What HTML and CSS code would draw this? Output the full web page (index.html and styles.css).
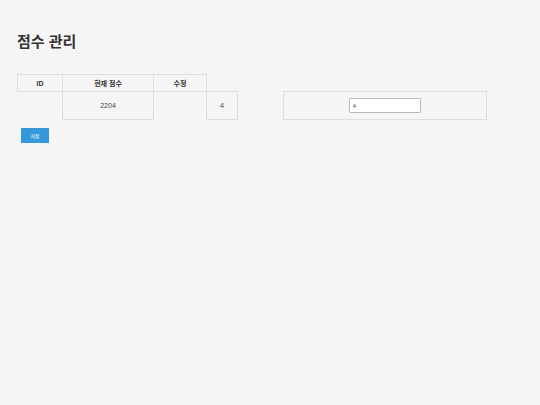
FILE: index.html
```html
<!DOCTYPE html>
<html lang="ko">
<head>
<meta charset="utf-8">
<link rel="stylesheet" href="styles.css">
</head>
<body>
<h1 class="title">점수 관리</h1>
<table class="score-table">
  <colgroup>
    <col class="c1"><col class="c2"><col class="c3"><col class="c4"><col class="c5"><col class="c6">
  </colgroup>
  <thead>
    <tr>
      <th>ID</th>
      <th>현재 점수</th>
      <th>수정</th>
    </tr>
  </thead>
  <tbody>
    <tr>
      <td class="empty"></td>
      <td>2204</td>
      <td class="empty"></td>
      <td>4</td>
      <td class="empty"></td>
      <td><input class="score-input" type="text" value="4"></td>
    </tr>
  </tbody>
</table>
<button class="save-btn">저장</button>
</body>
</html>
```
FILE: styles.css
```css
html, body {
  margin: 0;
  padding: 0;
  background: #f5f5f5;
}
body {
  padding: 17px;
  font-family: "Liberation Sans", "Noto Sans CJK KR", sans-serif;
  color: #333;
}
.title {
  margin: 16px 0 23px;
  font-size: 15px;
  line-height: 18px;
  font-weight: bold;
  color: #333;
}
.score-table {
  border-collapse: collapse;
  table-layout: fixed;
  width: 469px;
}
.score-table th,
.score-table td {
  border: 1px solid #dddddd;
  font-size: 7px;
  text-align: center;
  padding: 0;
}
.score-table th {
  height: 16px;
  font-weight: bold;
  color: #333;
}
.score-table td {
  height: 27px;
  color: #444;
}
.score-table td.empty {
  border: none;
}
.c1 { width: 45px; }
.c2 { width: 91px; }
.c3 { width: 53px; }
.c4 { width: 31px; }
.c5 { width: 46px; }
.c6 { width: 203px; }
.score-input {
  box-sizing: border-box;
  width: 72px;
  height: 15px;
  padding: 1px 3px;
  border: 1px solid #bbb;
  border-radius: 1px;
  background: #fff;
  font-size: 5px;
  font-family: "Liberation Sans", sans-serif;
  color: #333;
  display: block;
  margin: 0 auto;
}
.save-btn {
  margin: 8px 0 0 4px;
  width: 28px;
  height: 15px;
  padding: 0;
  border: none;
  background: #3498db;
  color: #fff;
  font-size: 5px;
  font-family: "Liberation Sans", "Noto Sans CJK KR", sans-serif;
  display: block;
}
```
